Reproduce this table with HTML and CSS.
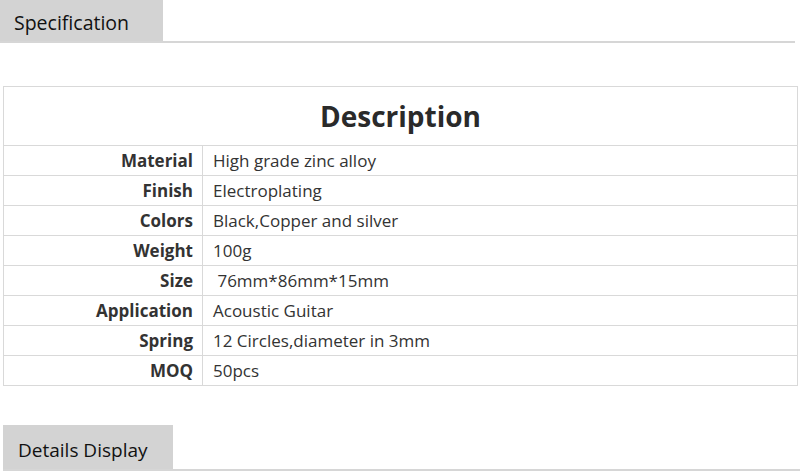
FILE: index.html
```html
<!DOCTYPE html>
<html>
<head>
<meta charset="utf-8">
<link rel="stylesheet" href="styles.css">
</head>
<body>
<div class="tab-bar top">
  <div class="tab tab-spec">Specification</div>
</div>
<table class="spec">
  <tr><th colspan="2" class="title">Description</th></tr>
  <tr><td class="label">Material</td><td class="value">High grade zinc alloy</td></tr>
  <tr><td class="label">Finish</td><td class="value">Electroplating</td></tr>
  <tr><td class="label">Colors</td><td class="value">Black,Copper and silver</td></tr>
  <tr><td class="label">Weight</td><td class="value">100g</td></tr>
  <tr><td class="label">Size</td><td class="value">&nbsp;76mm*86mm*15mm</td></tr>
  <tr><td class="label">Application</td><td class="value">Acoustic Guitar</td></tr>
  <tr><td class="label">Spring</td><td class="value">12 Circles,diameter in 3mm</td></tr>
  <tr><td class="label">MOQ</td><td class="value">50pcs</td></tr>
</table>
<div class="tab-bar bottom">
  <div class="tab tab-details">Details Display</div>
</div>
</body>
</html>
```
FILE: styles.css
```css
html, body {
  margin: 0;
  padding: 0;
  background: #fff;
  font-family: "Open Sans", "Liberation Sans", sans-serif;
  color: #333;
}
.tab-bar {
  display: flex;
  border-bottom: 2px solid #d6d6d6;
}
.tab-bar.top {
  width: 795px;
  height: 41px;
}
.tab {
  background: #d3d3d3;
  color: #111;
  font-size: 19px;
  display: flex;
  align-items: center;
}
.tab-spec {
  width: 163px;
  padding-left: 14px;
  box-sizing: border-box;
  padding-top: 3px;
  font-size: 19.5px;
}
.spec {
  margin: 43px 0 0 3px;
  width: 795px;
  border-collapse: collapse;
  border: 1px solid #d9d9d9;
}
.spec td, .spec th {
  border: 1px solid #d9d9d9;
  padding: 0;
}
.title {
  height: 58px;
  font-size: 28px;
  font-weight: 700;
  color: #2a2a2a;
  text-align: center;
  vertical-align: middle;
}
.spec td {
  height: 29px;
  font-size: 17px;
  vertical-align: middle;
}
.label {
  width: 189px;
  text-align: right;
  font-weight: 700;
  padding-right: 9px !important;
  color: #333;
}
.value {
  padding-left: 10px !important;
  color: #333;
}
.tab-bar.bottom {
  margin: 39px 0 0 3px;
  width: 797px;
  height: 44px;
}
.tab-details {
  width: 170px;
  padding-left: 15px;
  box-sizing: border-box;
  padding-top: 5px;
}
```
